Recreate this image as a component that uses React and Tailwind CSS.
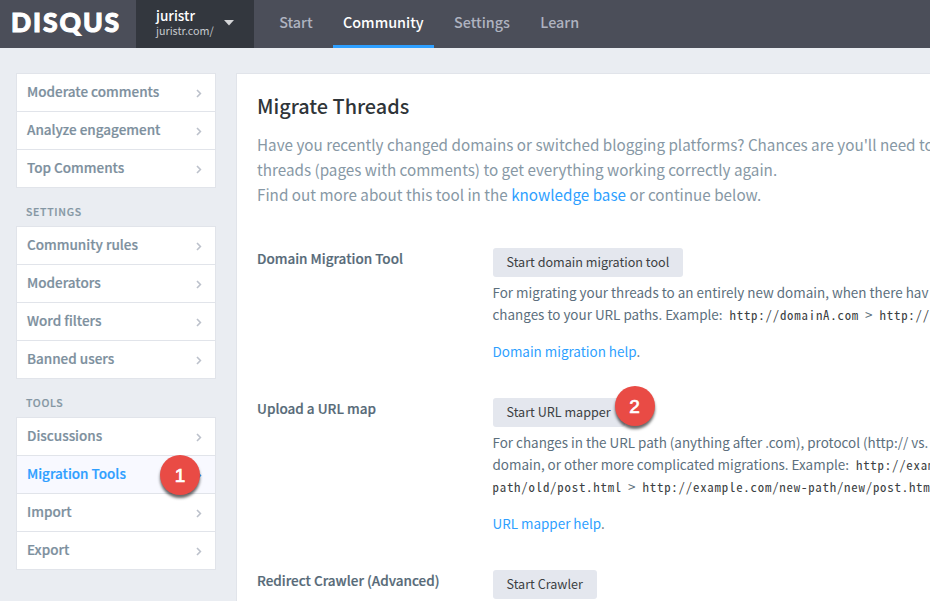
const NAV = [
  { label: "Start" },
  { label: "Community", active: true },
  { label: "Settings" },
  { label: "Learn" },
];

const GROUPS = [
  { items: ["Moderate comments", "Analyze engagement", "Top Comments"] },
  { title: "SETTINGS", items: ["Community rules", "Moderators", "Word filters", "Banned users"] },
  { title: "TOOLS", items: ["Discussions", "Migration Tools", "Import", "Export"] },
];

function Chevron({ active }) {
  return (
    <svg width="6" height="9" viewBox="0 0 6 9" fill="none" className={active ? "text-[#2e9fff]" : "text-[#bcc1cb]"}>
      <path d="M1 1l3.4 3.5L1 8" stroke="currentColor" strokeWidth="1.6" />
    </svg>
  );
}

function Badge({ children, place }) {
  return (
    <span className={`absolute flex size-10 items-center justify-center rounded-full bg-[#e94b45] font-['Liberation_Sans',sans-serif] text-[19px] leading-none text-white shadow-[0_3px_3px_rgba(0,0,0,0.6)] [-webkit-text-stroke:0.7px_white] ${place}`}>
      {children}
    </span>
  );
}

function Header() {
  return (
    <header className="flex h-12 bg-[#4b4e59]">
      <div className="flex w-[136px] items-center pl-[11px] pb-[4px]">
        <span className="font-['Lato',sans-serif] text-[26.5px] font-black leading-none tracking-[1.9px] text-white [-webkit-text-stroke:1px_white]">DISQUS</span>
      </div>
      <div className="flex w-[118px] items-center bg-[#33373e] pl-5 pb-[2px]">
        <div className="w-[68px] whitespace-nowrap">
          <div className="text-[13.6px] font-medium leading-4 text-white">juristr</div>
          <div className="text-[10.75px] leading-4 text-[#c5c8cd]">juristr.com/</div>
        </div>
        <svg width="10" height="6" viewBox="0 0 10 6" fill="#d5d6d8">
          <path d="M0 0h10L5 5.5z" />
        </svg>
      </div>
      <nav className="flex gap-[10px] pl-[15px]">
        {NAV.map((n) => (
          <a key={n.label} className={`flex h-12 items-center border-b-[3px] px-[10.2px] pb-[2px] text-[14.35px] font-medium ${n.active ? "border-[#2e9fff] text-white" : "border-transparent text-[#afb3c0]"}`}>
            {n.label}
          </a>
        ))}
      </nav>
    </header>
  );
}

function Sidebar() {
  return (
    <aside className="w-[200px] shrink-0">
      {GROUPS.map((g, i) => (
        <section key={i}>
          {g.title && (
            <h3 className="flex h-[38px] items-center pl-[10px] pt-[10px] text-[10.5px] font-medium tracking-[0.7px] text-[#8496a3] [-webkit-text-stroke:0.2px_currentColor]">{g.title}</h3>
          )}
          <ul className="border border-b-0 border-[#e1e4ea] bg-white">
            {g.items.map((t) => {
              const active = t === "Migration Tools";
              return (
                <li key={t} className={`relative flex h-[38px] items-center justify-between border-b border-[#e1e4ea] pl-[10px] pr-[13px] text-[13.5px] font-medium ${active ? "bg-[#f8f9ff] text-[#2e9fff]" : "text-[#7d909e]"}`}>
                  <span className="pb-[3px] [-webkit-text-stroke:0.2px_currentColor]">{t}</span>
                  <span className="pt-[2px]"><Chevron active={active} /></span>
                  {active && <Badge place="left-[143px] top-[-1px]">1</Badge>}
                </li>
              );
            })}
          </ul>
        </section>
      ))}
    </aside>
  );
}

function Code({ children, pad }) {
  return <code className={`font-['Noto_Sans_Mono_CJK_SC','Liberation_Mono',monospace] text-[12.8px] leading-none tracking-[0.8px] text-[#3c3f43] ${pad ?? "pl-[4px] pr-[3px]"}`}>{children}</code>;
}

function Tool({ title, button, height, badge, children }) {
  return (
    <section className={`flex ${height}`}>
      <h2 className="w-[235.5px] shrink-0 text-[13.5px] font-medium leading-[21px] text-[#566a78] [-webkit-text-stroke:0.2px_currentColor]">{title}</h2>
      <div className="whitespace-nowrap text-[13.45px] leading-[22px] text-[#5c6f7d]">
        <div className="relative mb-[4px] w-fit">
          <button className="block h-[29px] rounded-[3px] bg-[#e4e7ee] px-[14px] pb-[2px] text-[12.6px] text-[#3c3f43]">{button}</button>
          {badge}
        </div>
        {children}
      </div>
    </section>
  );
}

export default function App() {
  return (
    <div className="h-[601px] w-[930px] overflow-hidden bg-[#eaedf2] font-['Noto_Sans_CJK_SC',sans-serif]">
      <Header />
      <div className="flex gap-5 pl-4 pt-[25px]">
        <Sidebar />
        <main className="h-[600px] w-[800px] shrink-0 border border-[#e1e4ea] bg-white pl-5 pt-5">
          <h1 className="text-[19.85px] font-medium leading-[24px] text-[#2f3539]">Migrate Threads</h1>
          <div className="mt-[14px] whitespace-nowrap text-[15.24px] leading-[25px] text-[#8798a5]">
            <p>Have you recently changed domains or switched blogging platforms? Chances are you'll need to</p>
            <p>threads (pages with comments) to get everything working correctly again.</p>
            <p>Find out more about this tool in the <a className="text-[#2e9fff]">knowledge base</a> or continue below.</p>
          </div>
          <div className="pt-[41px]">
            <Tool title="Domain Migration Tool" button="Start domain migration tool" height="h-[150px]">
              <p>For migrating your threads to an entirely new domain, when there hav</p>
              <p>changes to your URL paths. Example: <Code>http://domainA.com</Code> &gt; <Code>http://</Code></p>
              <p className="mt-[15px]"><a className="text-[#2e9fff]">Domain migration help</a>.</p>
            </Tool>
            <Tool title="Upload a URL map" button="Start URL mapper" height="h-[172px]" badge={<Badge place="left-[122px] top-[-12px]">2</Badge>}>
              <p>For changes in the URL path (anything after .com), protocol (http:// vs.</p>
              <p>domain, or other more complicated migrations. Example: <Code>http://exam</Code></p>
              <p><Code pad="pr-[3px]">path/old/post.html</Code> &gt; <Code>http://example.com/new-path/new/post.htm</Code></p>
              <p className="mt-[15px]"><a className="text-[#2e9fff]">URL mapper help</a>.</p>
            </Tool>
            <Tool title="Redirect Crawler (Advanced)" button="Start Crawler" height="h-[60px]" />
          </div>
        </main>
      </div>
    </div>
  );
}
